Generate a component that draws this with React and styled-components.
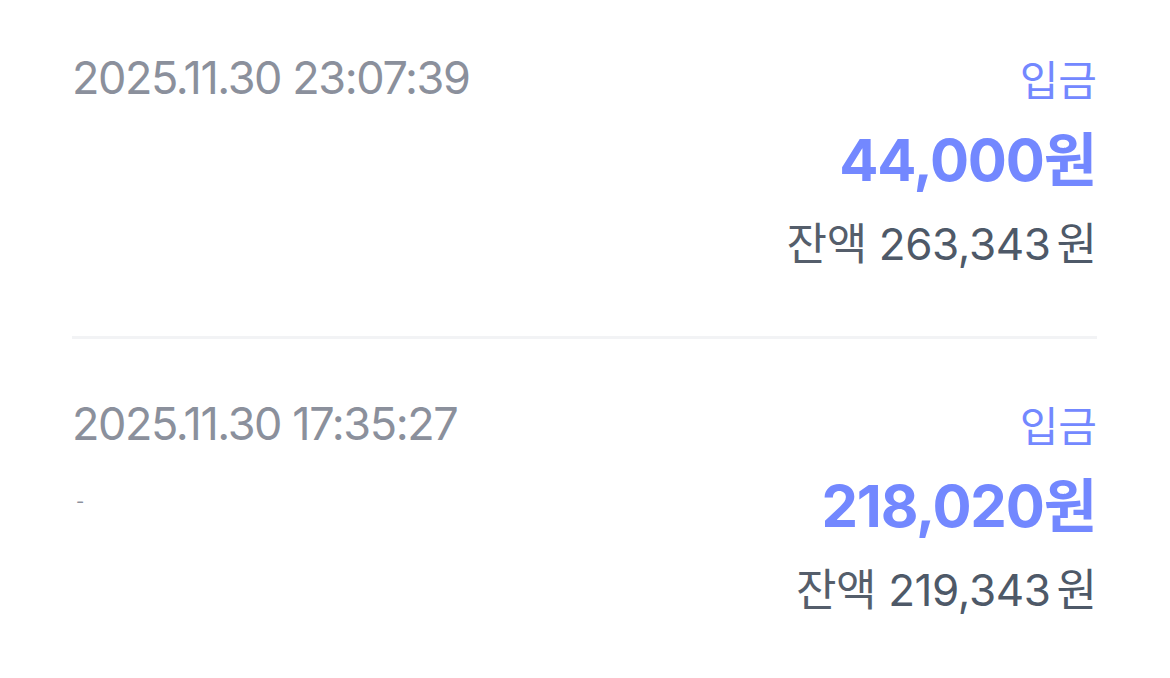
import styled, { createGlobalStyle } from 'styled-components'

const GlobalStyle = createGlobalStyle`
  html, body {
    margin: 0;
    padding: 0;
    background: #ffffff;
  }
  body {
    font-family: Inter, "Noto Sans CJK KR", sans-serif;
  }
`

const List = styled.ul`
  list-style: none;
  margin: 0;
  padding: 0 73px 0 72px;
`

const Item = styled.li`
  display: flex;
  justify-content: space-between;
  align-items: flex-start;
  padding: 46px 0 62px;
  border-bottom: 3px solid #f2f3f5;

  & + & {
    padding-top: 53px;
  }

  &:last-child {
    border-bottom: none;
  }
`

const Left = styled.div`
  display: flex;
  flex-direction: column;
  align-items: flex-start;
`

const DateText = styled.span`
  font-size: 45px;
  line-height: 64px;
  color: #8b909c;
  letter-spacing: -1.4px;
`

const Memo = styled.span`
  margin-top: 34px;
  padding-left: 4px;
  font-size: 18px;
  line-height: 24px;
  color: #8b909c;
`

const Right = styled.div`
  display: flex;
  flex-direction: column;
  align-items: flex-end;
`

const TypeLabel = styled.span`
  font-family: "Noto Sans CJK KR", sans-serif;
  font-size: 42px;
  line-height: 64px;
  color: #7388ff;
`

const Amount = styled.span`
  font-size: 58px;
  font-weight: 700;
  line-height: 84px;
  margin-top: 4px;
  color: #7388ff;
  letter-spacing: -1.2px;
`

const Won = styled.span`
  font-family: "Noto Sans CJK KR", sans-serif;
  letter-spacing: 0;
`

const Balance = styled.span`
  font-size: 44px;
  line-height: 60px;
  margin-top: 9px;
  color: #4e5968;
  letter-spacing: -0.4px;

  ${Won} {
    margin-left: 6px;
  }
`

const BalanceLabel = styled.span`
  font-family: "Noto Sans CJK KR", sans-serif;
  color: #555e6b;
  margin-right: 12px;
`

const rows = [
  { date: '2025.11.30 23:07:39', memo: '', type: '입금', amount: '44,000', balance: '263,343' },
  { date: '2025.11.30 17:35:27', memo: '-', type: '입금', amount: '218,020', balance: '219,343' },
]

const App = () => {
  return (
    <>
      <GlobalStyle />
      <List>
        {rows.map((row) => (
          <Item key={row.date}>
            <Left>
              <DateText>{row.date}</DateText>
              {row.memo && <Memo>{row.memo}</Memo>}
            </Left>
            <Right>
              <TypeLabel>{row.type}</TypeLabel>
              <Amount>
                {row.amount}
                <Won>원</Won>
              </Amount>
              <Balance>
                <BalanceLabel>잔액</BalanceLabel>
                {row.balance}
                <Won>원</Won>
              </Balance>
            </Right>
          </Item>
        ))}
      </List>
    </>
  )
}

export default App
